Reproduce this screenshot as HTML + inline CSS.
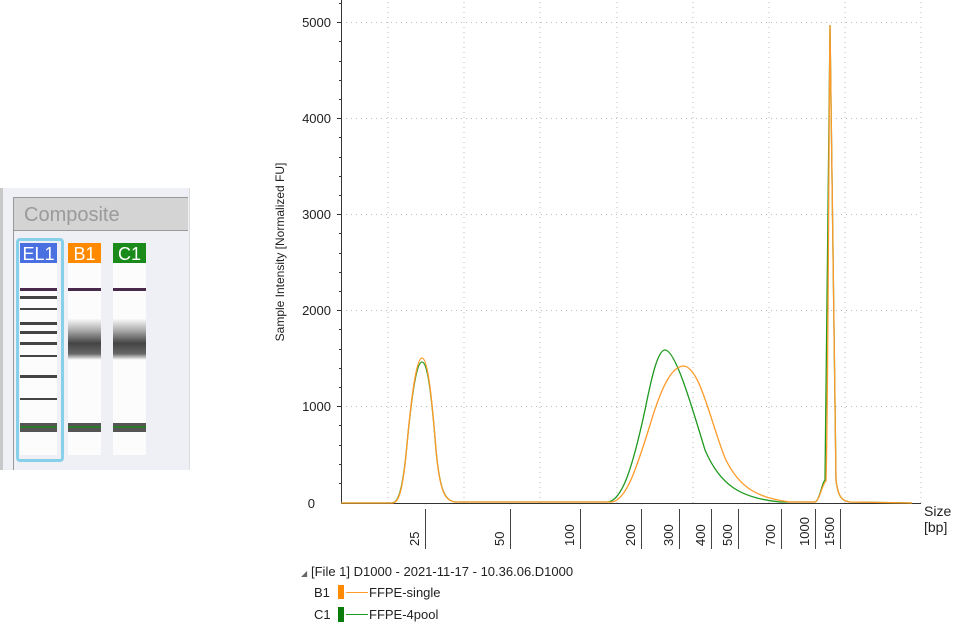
<!DOCTYPE html>
<html><head><meta charset="utf-8"><style>
body{margin:0;width:966px;height:629px;background:#fff;overflow:hidden;position:relative;font-family:"Liberation Sans",Arial,sans-serif}
.a{position:absolute}
</style></head><body>
<div class="a" style="left:0;top:188px;width:189px;height:282px;background:#eef0f5;border-right:1px solid #ddd"></div>
<div class="a" style="left:0;top:188px;width:3px;height:282px;background:#c8c8c8"></div>
<div class="a" style="left:13px;top:197px;width:175px;height:34px;background:#d4d4d4;border:1px solid #999;border-right:none;box-sizing:border-box"></div>
<div class="a" style="left:13px;top:231px;width:1px;height:239px;background:#999"></div>
<div class="a" style="left:24px;top:204px;font-size:20px;color:#9a9a9a">Composite</div>
<div class="a" style="left:16px;top:238px;width:42px;height:218px;border:3px solid #86d0ea;border-radius:4px"></div>
<svg class="a" style="left:0;top:0" width="190" height="470">
<defs>
<linearGradient id="sm" x1="0" y1="0" x2="0" y2="1">
<stop offset="0" stop-color="#fff"/><stop offset="0.3" stop-color="#aaa"/><stop offset="0.6" stop-color="#444"/><stop offset="0.85" stop-color="#666"/><stop offset="1" stop-color="#fff"/></linearGradient></defs>
<rect x="20" y="243" width="37" height="20" fill="#4a6fe0"/>
<text x="38.5" y="260" font-size="18" fill="#fff" text-anchor="middle" font-family="Liberation Sans">EL1</text>
<rect x="68" y="243" width="33" height="20" fill="#ff8a00"/>
<text x="84.5" y="260" font-size="18" fill="#fff" text-anchor="middle" font-family="Liberation Sans">B1</text>
<rect x="113" y="243" width="33" height="20" fill="#1a8a1a"/>
<text x="129.5" y="260" font-size="18" fill="#fff" text-anchor="middle" font-family="Liberation Sans">C1</text>
<rect x="20" y="263" width="37" height="192" fill="#fcfcfc"/>
<rect x="68" y="263" width="33" height="192" fill="#fcfcfc"/>
<rect x="113" y="263" width="33" height="192" fill="#fcfcfc"/>
<g fill="#4a2a4a"><rect x="20" y="288" width="37" height="3"/><rect x="68" y="288" width="33" height="3"/><rect x="113" y="288" width="33" height="3"/></g>
<g fill="#444"><rect x="20" y="296" width="37" height="3"/><rect x="20" y="308" width="37" height="2"/><rect x="20" y="322" width="37" height="3"/><rect x="20" y="331" width="37" height="3"/><rect x="20" y="342" width="37" height="3"/><rect x="20" y="355" width="37" height="2"/><rect x="20" y="375" width="37" height="3"/><rect x="20" y="398" width="37" height="2"/></g>
<rect x="68" y="318" width="33" height="42" fill="url(#sm)"/>
<rect x="113" y="318" width="33" height="42" fill="url(#sm)"/>
<g fill="#555"><rect x="20" y="423" width="37" height="9"/><rect x="68" y="423" width="33" height="9"/><rect x="113" y="423" width="33" height="9"/></g>
<g fill="#2a7a2a"><rect x="20" y="426" width="37" height="2"/><rect x="68" y="426" width="33" height="2"/><rect x="113" y="426" width="33" height="2"/></g>
</svg>
<svg class="a" style="left:0;top:0" width="966" height="629" font-family="Liberation Sans" font-size="13">
<g stroke="#bbb" stroke-dasharray="1,4" stroke-width="1">
<line x1="388" y1="2" x2="388" y2="503"/><line x1="464" y1="2" x2="464" y2="503"/><line x1="540" y1="2" x2="540" y2="503"/><line x1="617" y1="2" x2="617" y2="503"/><line x1="693" y1="2" x2="693" y2="503"/><line x1="769" y1="2" x2="769" y2="503"/><line x1="845" y1="2" x2="845" y2="503"/><line x1="921" y1="2" x2="921" y2="503"/>
<line x1="341" y1="22.5" x2="921" y2="22.5"/><line x1="341" y1="118.5" x2="921" y2="118.5"/><line x1="341" y1="214.5" x2="921" y2="214.5"/><line x1="341" y1="310.5" x2="921" y2="310.5"/><line x1="341" y1="406.5" x2="921" y2="406.5"/>
</g>
<line x1="341.5" y1="0" x2="341.5" y2="504" stroke="#333"/>
<line x1="341" y1="503.5" x2="921" y2="503.5" stroke="#333"/>
<g stroke="#333">
<line x1="337" y1="22.5" x2="341" y2="22.5"/><line x1="337" y1="118.5" x2="341" y2="118.5"/><line x1="337" y1="214.5" x2="341" y2="214.5"/><line x1="337" y1="310.5" x2="341" y2="310.5"/><line x1="337" y1="406.5" x2="341" y2="406.5"/>
<line x1="339" y1="3.5" x2="341" y2="3.5"/><line x1="339" y1="41.5" x2="341" y2="41.5"/><line x1="339" y1="61.5" x2="341" y2="61.5"/><line x1="339" y1="80.5" x2="341" y2="80.5"/><line x1="339" y1="99.5" x2="341" y2="99.5"/>
<line x1="339" y1="137.5" x2="341" y2="137.5"/><line x1="339" y1="157.5" x2="341" y2="157.5"/><line x1="339" y1="176.5" x2="341" y2="176.5"/><line x1="339" y1="195.5" x2="341" y2="195.5"/>
<line x1="339" y1="233.5" x2="341" y2="233.5"/><line x1="339" y1="253.5" x2="341" y2="253.5"/><line x1="339" y1="272.5" x2="341" y2="272.5"/><line x1="339" y1="291.5" x2="341" y2="291.5"/>
<line x1="339" y1="329.5" x2="341" y2="329.5"/><line x1="339" y1="349.5" x2="341" y2="349.5"/><line x1="339" y1="368.5" x2="341" y2="368.5"/><line x1="339" y1="387.5" x2="341" y2="387.5"/>
<line x1="339" y1="425.5" x2="341" y2="425.5"/><line x1="339" y1="445.5" x2="341" y2="445.5"/><line x1="339" y1="464.5" x2="341" y2="464.5"/><line x1="339" y1="483.5" x2="341" y2="483.5"/>
</g>
<g fill="#222" text-anchor="end"><text x="331" y="27">5000</text><text x="331" y="123">4000</text><text x="331" y="219">3000</text><text x="331" y="315">2000</text><text x="331" y="411">1000</text><text x="315" y="508">0</text></g>
<text transform="translate(284,252) rotate(-90)" text-anchor="middle" font-size="12" fill="#222">Sample Intensity [Normalized FU]</text>
<g stroke="#444"><line x1="425.5" y1="509" x2="425.5" y2="549"/><line x1="510.5" y1="509" x2="510.5" y2="549"/><line x1="580.5" y1="509" x2="580.5" y2="549"/><line x1="641.5" y1="509" x2="641.5" y2="549"/><line x1="679.5" y1="509" x2="679.5" y2="549"/><line x1="711.5" y1="509" x2="711.5" y2="549"/><line x1="738.5" y1="509" x2="738.5" y2="549"/><line x1="781.5" y1="509" x2="781.5" y2="549"/><line x1="815.5" y1="509" x2="815.5" y2="549"/><line x1="840.5" y1="509" x2="840.5" y2="549"/></g>
<g fill="#222">
<text transform="translate(419,546) rotate(-90)">25</text><text transform="translate(504,546) rotate(-90)">50</text><text transform="translate(574,546) rotate(-90)">100</text><text transform="translate(635,546) rotate(-90)">200</text><text transform="translate(673,546) rotate(-90)">300</text><text transform="translate(705,546) rotate(-90)">400</text><text transform="translate(732,546) rotate(-90)">500</text><text transform="translate(775,546) rotate(-90)">700</text><text transform="translate(809,546) rotate(-90)">1000</text><text transform="translate(834,546) rotate(-90)">1500</text>
</g>
<text x="924" y="516" font-size="14" fill="#222">Size</text><text x="924" y="532" font-size="14" fill="#222">[bp]</text>
<path d="M341,503 L392,503 C398,503 402,492 406,455 C411,400 416,362 422,362 C428,362 432,400 436,450 C440,492 445,500 455,502 L608,502 C622,500 632,470 645,410 C652,375 658,350 665,350 C675,350 690,400 705,450 C720,485 740,498 780,502 L815,502 C820,500 822,482 825,480 C827,420 828,100 830,25 C832,100 834,400 836,480 C838,497 842,501 850,502 L912,503" fill="none" stroke="#1e9a1e" stroke-width="1.3"/>
<path d="M341,503 L392,503 C398,503 402,495 406,455 C411,400 416,358 422,358 C428,358 432,400 436,450 C440,493 445,500 455,502 L612,502 C626,500 636,470 650,425 C662,385 672,366 684,366 C700,368 710,420 725,458 C740,490 760,498 790,502 L815,502 C820,500 822,484 826,481 C828,420 829,100 830,25 C832,100 834,400 836,480 C838,497 842,501 850,502 L912,503" fill="none" stroke="#ff9a2a" stroke-width="1.3"/>
<text x="301" y="576" fill="#666" font-size="8">◢</text>
<text x="311" y="576" fill="#222">[File 1] D1000 - 2021-11-17 - 10.36.06.D1000</text>
<text x="314" y="597" fill="#222">B1</text><rect x="338" y="585" width="6" height="14" fill="#ff8a00"/><line x1="346" y1="592.5" x2="368" y2="592.5" stroke="#ff9a2a"/><text x="369" y="597" fill="#222">FFPE-single</text>
<text x="314" y="619" fill="#222">C1</text><rect x="338" y="607" width="6" height="15" fill="#0a7a0a"/><line x1="346" y1="614.5" x2="368" y2="614.5" stroke="#1e9a1e"/><text x="369" y="619" fill="#222">FFPE-4pool</text>
</svg>
</body></html>
